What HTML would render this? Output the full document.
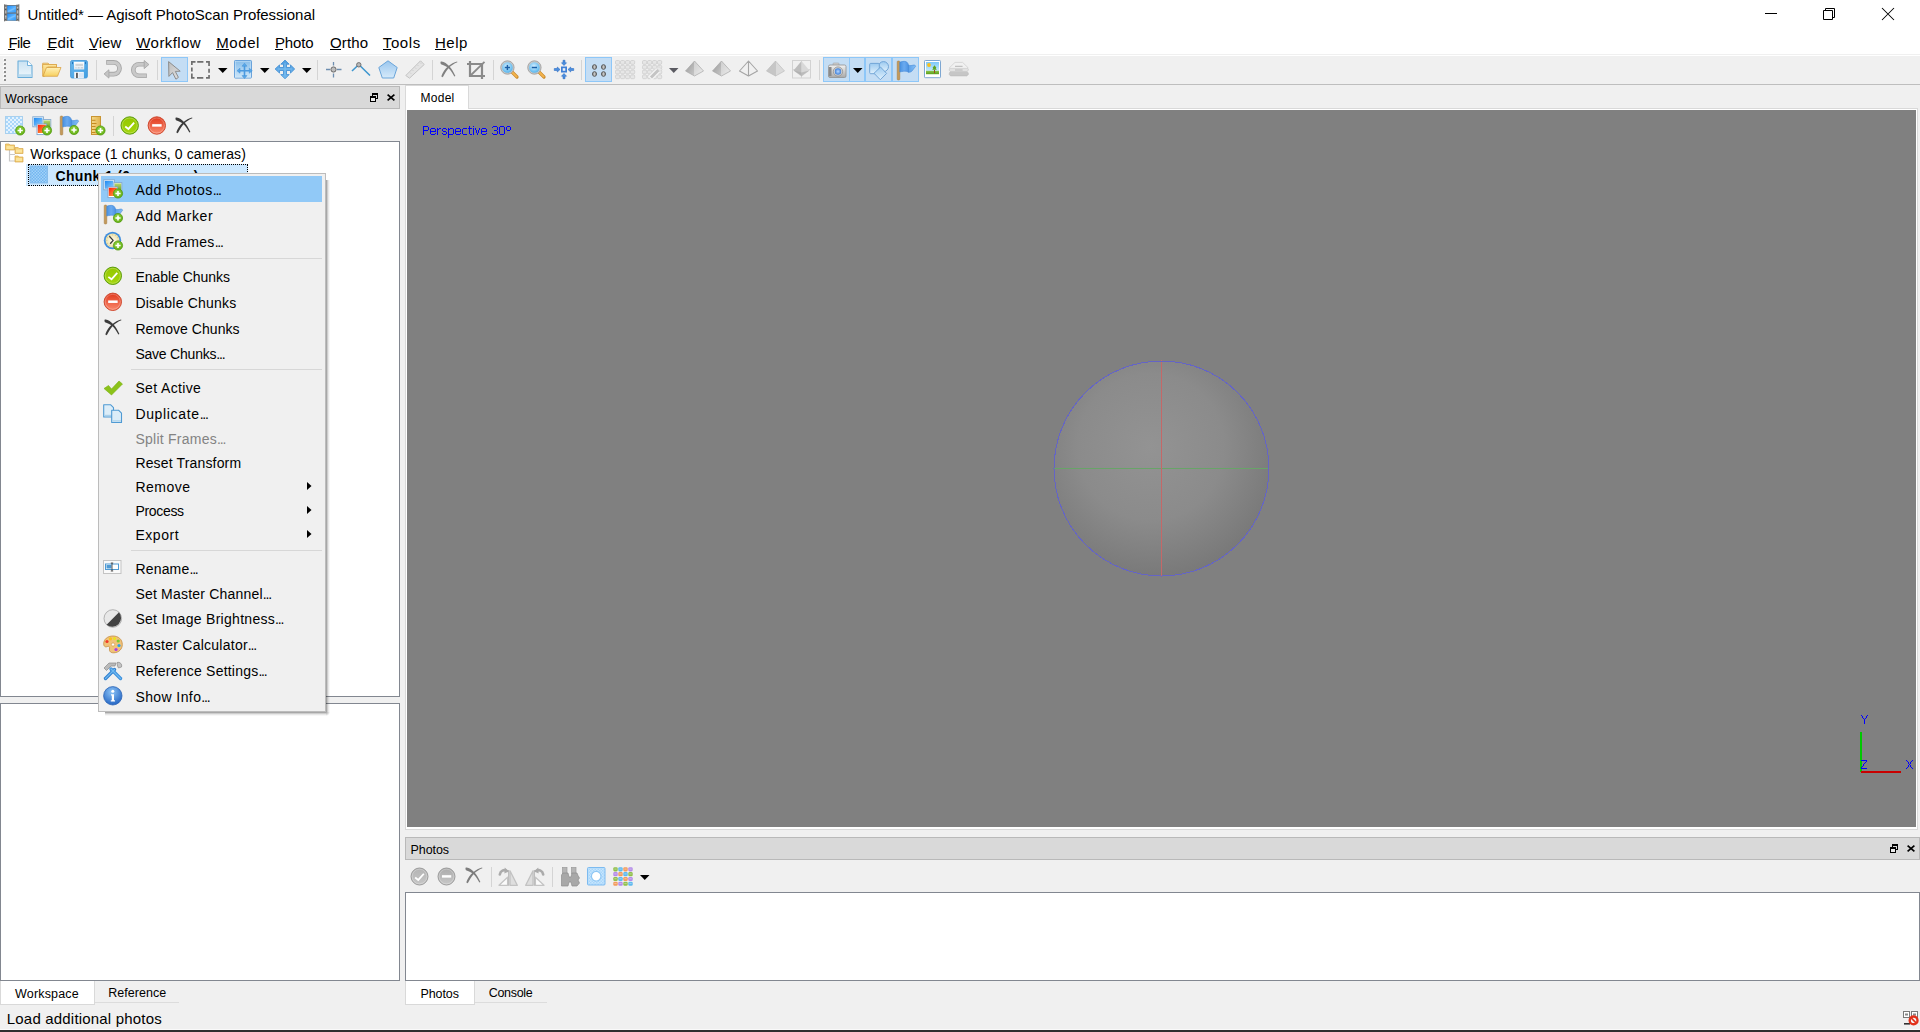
<!DOCTYPE html>
<html><head><meta charset="utf-8">
<style>
*{box-sizing:border-box;margin:0;padding:0}
html,body{width:1920px;height:1032px;overflow:hidden;background:#f0f0f0;font-family:"Liberation Sans",sans-serif;color:#000}
.a{position:absolute}
.t{position:absolute;white-space:nowrap;line-height:1}
svg{position:absolute;overflow:visible}
</style></head><body>
<div class="a" style="left:0px;top:0px;width:1920px;height:54px;background:#fff;"></div>
<div class="a" style="left:0px;top:54px;width:1920px;height:1px;background:#f0f0f0;"></div>
<div class="a" style="left:0px;top:55px;width:1920px;height:1px;background:#fff;"></div>
<svg style="left:4.35px;top:4.35px" width="16" height="18" viewBox="0 0 16 18"><defs><linearGradient id="g1" x1="0" y1="0" x2="1" y2="1"><stop offset="0" stop-color="#1a8cff"/><stop offset="0.55" stop-color="#5db4ff"/><stop offset="1" stop-color="#2f96f5"/></linearGradient></defs><defs><linearGradient id="g2" x1="0" y1="0" x2="1" y2="0"><stop offset="0" stop-color="#6c6c6c"/><stop offset="0.5" stop-color="#a4a4a4"/><stop offset="1" stop-color="#6c6c6c"/></linearGradient></defs><path d="M0 0.3Q1.6 0.9 3.3 0.9H12Q13.7 0.9 15.35 0.3V17.4Q13.7 16.8 12 16.8H3.3Q1.6 16.8 0 17.4Z" fill="#727272"/><rect x="0.3" y="0.8" width="2.9" height="16.2" fill="url(#g2)"/><rect x="12.1" y="0.8" width="2.9" height="16.2" fill="url(#g2)"/><rect x="3.25" y="1.7" width="8.75" height="7.05" fill="url(#g1)"/><rect x="3.25" y="9.35" width="8.75" height="7.1" fill="url(#g1)"/><rect x="3.25" y="8.75" width="8.75" height="0.6" fill="#76675e"/><path d="M4 6.5L11.5 3.5V5L4 8Z M4 14L11.5 11V12.5L4 15.5Z" fill="#fff" opacity="0.18"/><rect x="1" y="2.6" width="1.4" height="1" fill="#d0d0d0"/><rect x="12.9" y="2.6" width="1.4" height="1" fill="#d0d0d0"/><rect x="1" y="7.5" width="1.4" height="1" fill="#d0d0d0"/><rect x="12.9" y="7.5" width="1.4" height="1" fill="#d0d0d0"/><rect x="1" y="12.3" width="1.4" height="1" fill="#d0d0d0"/><rect x="12.9" y="12.3" width="1.4" height="1" fill="#d0d0d0"/><rect x="1" y="1.5" width="1.4" height="1" fill="#505050"/><rect x="12.9" y="1.5" width="1.4" height="1" fill="#505050"/><rect x="1" y="4.9" width="1.4" height="1" fill="#505050"/><rect x="12.9" y="4.9" width="1.4" height="1" fill="#505050"/><rect x="1" y="9.8" width="1.4" height="1" fill="#505050"/><rect x="12.9" y="9.8" width="1.4" height="1" fill="#505050"/><rect x="1" y="15.2" width="1.4" height="1" fill="#505050"/><rect x="12.9" y="15.2" width="1.4" height="1" fill="#505050"/></svg>
<div class="t" style="left:27.5px;top:7px;font-size:15px;letter-spacing:-0.044px;">Untitled* — Agisoft PhotoScan Professional</div>
<svg style="left:1765px;top:13px" width="12" height="1" viewBox="0 0 12 1"><rect x="0" y="0" width="12" height="1" fill="#000"/></svg>
<svg style="left:1822px;top:7px" width="14" height="14" viewBox="0 0 14 14"><path d="M1.5 3.5H10.5V12.5H1.5Z M3.5 3V1.5H12.5V10.5H11" fill="none" stroke="#000" stroke-width="1"/></svg>
<svg style="left:1882px;top:8px" width="12" height="12" viewBox="0 0 12 12"><path d="M0 0L12 12M12 0L0 12" stroke="#000" stroke-width="1.05"/></svg>
<div class="t" style="left:8.5px;top:35px;font-size:15px;letter-spacing:-0.6px;">File</div>
<div class="t" style="left:47.5px;top:35px;font-size:15px;letter-spacing:0.066px;">Edit</div>
<div class="t" style="left:89px;top:35px;font-size:15px;letter-spacing:0.0px;">View</div>
<div class="t" style="left:136.3px;top:35px;font-size:15px;letter-spacing:0.429px;">Workflow</div>
<div class="t" style="left:216.3px;top:35px;font-size:15px;letter-spacing:0.55px;">Model</div>
<div class="t" style="left:275px;top:35px;font-size:15px;letter-spacing:-0.15px;">Photo</div>
<div class="t" style="left:330px;top:35px;font-size:15px;letter-spacing:0.15px;">Ortho</div>
<div class="t" style="left:382.8px;top:35px;font-size:15px;letter-spacing:0.6px;">Tools</div>
<div class="t" style="left:435px;top:35px;font-size:15px;letter-spacing:0.533px;">Help</div>
<div class="a" style="left:8px;top:49px;width:7px;height:1px;background:#000;"></div>
<div class="a" style="left:47px;top:49px;width:8px;height:1px;background:#000;"></div>
<div class="a" style="left:89px;top:49px;width:8px;height:1px;background:#000;"></div>
<div class="a" style="left:136px;top:49px;width:14px;height:1px;background:#000;"></div>
<div class="a" style="left:216px;top:49px;width:13px;height:1px;background:#000;"></div>
<div class="a" style="left:275px;top:49px;width:8px;height:1px;background:#000;"></div>
<div class="a" style="left:330px;top:49px;width:11px;height:1px;background:#000;"></div>
<div class="a" style="left:383px;top:49px;width:8px;height:1px;background:#000;"></div>
<div class="a" style="left:435px;top:49px;width:11px;height:1px;background:#000;"></div>
<div class="a" style="left:0px;top:84px;width:1920px;height:1px;background:#bebebe;"></div>
<div class="a" style="left:3px;top:58px;width:2px;height:2px;background:#fbfbfb;"></div>
<div class="a" style="left:4px;top:59px;width:2px;height:2px;background:#8e8e8e;"></div>
<div class="a" style="left:3px;top:62px;width:2px;height:2px;background:#fbfbfb;"></div>
<div class="a" style="left:4px;top:63px;width:2px;height:2px;background:#8e8e8e;"></div>
<div class="a" style="left:3px;top:66px;width:2px;height:2px;background:#fbfbfb;"></div>
<div class="a" style="left:4px;top:67px;width:2px;height:2px;background:#8e8e8e;"></div>
<div class="a" style="left:3px;top:70px;width:2px;height:2px;background:#fbfbfb;"></div>
<div class="a" style="left:4px;top:71px;width:2px;height:2px;background:#8e8e8e;"></div>
<div class="a" style="left:3px;top:74px;width:2px;height:2px;background:#fbfbfb;"></div>
<div class="a" style="left:4px;top:75px;width:2px;height:2px;background:#8e8e8e;"></div>
<div class="a" style="left:3px;top:78px;width:2px;height:2px;background:#fbfbfb;"></div>
<div class="a" style="left:4px;top:79px;width:2px;height:2px;background:#8e8e8e;"></div>
<svg style="left:17px;top:60px" width="16" height="19" viewBox="0 0 16 19"><defs><linearGradient id="g3" x1="0" y1="0" x2="0" y2="1"><stop offset="0" stop-color="#c9e2f2"/><stop offset="1" stop-color="#eef7fc"/></linearGradient></defs><path d="M1 1H10.5L15 5.5V17.5H1Z" fill="url(#g3)" stroke="#67acd9" stroke-width="1.05" stroke-linejoin="round"/><path d="M10.5 1V5.5H15" fill="#fff" stroke="#67acd9" stroke-width="0.9"/><rect x="1.6" y="14.2" width="12.8" height="2.7" fill="#bcdcef"/></svg>
<svg style="left:42px;top:62px" width="20" height="15" viewBox="0 0 20 15"><defs><linearGradient id="g4" x1="0" y1="0" x2="0" y2="1"><stop offset="0" stop-color="#fde7a0"/><stop offset="1" stop-color="#f2c24e"/></linearGradient></defs><defs><linearGradient id="g5" x1="0" y1="0" x2="0" y2="1"><stop offset="0" stop-color="#fff1b8"/><stop offset="1" stop-color="#f7cf5d"/></linearGradient></defs><path d="M0.7 1.2H6L7.5 2.5H14.5V6H0.7Z" fill="url(#g4)" stroke="#d9a245" stroke-width="0.8"/><path d="M0.7 14.3V2.5L14.5 2.5V5H5.5L2.5 14.3Z" fill="url(#g4)" stroke="#d9a245" stroke-width="0.8"/><path d="M4.5 5.5H19L15.5 14.3H1Z" fill="url(#g5)" stroke="#d9a245" stroke-width="0.8" stroke-linejoin="round"/></svg>
<svg style="left:70px;top:60px" width="18" height="19" viewBox="0 0 18 19"><defs><linearGradient id="g6" x1="0" y1="0" x2="1" y2="1"><stop offset="0" stop-color="#6bb9ee"/><stop offset="1" stop-color="#3f9de2"/></linearGradient></defs><defs><linearGradient id="g7" x1="0" y1="0" x2="0" y2="1"><stop offset="0" stop-color="#ffffff"/><stop offset="1" stop-color="#dde8f1"/></linearGradient></defs><rect x="0.6" y="0.5" width="16.8" height="17.5" rx="1.6" fill="url(#g6)" stroke="#4a9ad8" stroke-width="0.9"/><rect x="4" y="1.8" width="10.2" height="7.7" fill="url(#g7)"/><path d="M5.5 4.3H13M5.5 5.3H13" stroke="#c4c8cc" stroke-width="0.9"/><path d="M5.5 7.8H6.5M7.8 7.8H9.6M10.8 7.8H13" stroke="#b0b4b8" stroke-width="0.7"/><rect x="2" y="1.8" width="0.9" height="2.3" fill="#1f6fb8"/><rect x="15" y="1.8" width="0.9" height="2.3" fill="#1f6fb8"/><rect x="4.2" y="11.9" width="9.6" height="6.4" fill="#f6f8fa"/><rect x="6.1" y="12.8" width="1.7" height="5.2" fill="#4a4a4e"/><rect x="8.8" y="12.8" width="4.2" height="4.9" fill="#d8e6f6"/></svg>
<div class="a" style="left:96px;top:60px;width:1px;height:20px;background:#d4d4d4;"></div>
<svg style="left:102px;top:58px" width="50" height="22" viewBox="0 0 50 22"><path d="M4.2 4.4H11.6A5.9 5.9 0 0 1 11.6 16.2H7" fill="none" stroke="#a6a6a6" stroke-width="4.8"/><path d="M5 4.4H11.6A5.9 5.9 0 0 1 11.6 16.2H7" fill="none" stroke="#c9c9c9" stroke-width="3"/><path d="M2.1 15.9L6.9 11.8V20.1Z" fill="#c4c4c4" stroke="#a6a6a6" stroke-width="0.9" stroke-linejoin="round"/><path d="M44.8 17.8H37.1A5.8 5.8 0 0 1 37.1 6.2H42.5" fill="none" stroke="#a6a6a6" stroke-width="4.6"/><path d="M44 17.8H37.1A5.8 5.8 0 0 1 37.1 6.2H42.5" fill="none" stroke="#c9c9c9" stroke-width="2.9"/><path d="M46.9 6.5L42.2 2.5V10.6Z" fill="#c4c4c4" stroke="#a6a6a6" stroke-width="0.9" stroke-linejoin="round"/></svg>
<div class="a" style="left:157px;top:60px;width:1px;height:20px;background:#d4d4d4;"></div>
<div class="a" style="left:161px;top:57px;width:27px;height:25px;background:#c4ddf4;border:1px solid #8ec7f8;"></div>
<svg style="left:160px;top:56px" width="28" height="26" viewBox="0 0 28 26"><defs><linearGradient id="g8" x1="0" y1="0" x2="1" y2="1"><stop offset="0" stop-color="#bdbdbd"/><stop offset="1" stop-color="#e2e2e2"/></linearGradient></defs><path d="M8.6 5.6L8.9 20.4L12.5 16.6L15.9 23.2L18.4 21.4L15.3 15.4L20.2 15.2Z" fill="url(#g8)" stroke="#8c8c8c" stroke-width="1" stroke-linejoin="round"/></svg>
<svg style="left:190px;top:60px" width="22" height="21" viewBox="0 0 22 21"><g fill="none" stroke="#6e6e6e" stroke-width="1.7"><path d="M1.85 5V1.85H5.5M7.2 1.85H13.4M16 1.85H19.05V6M1.85 7.5V11.4M19.05 8.8V12.8M1.85 13.6V17.85H4.5M7 17.85H13.3M16 17.85H19.05V15"/></g></svg>
<svg style="left:218px;top:68.2px" width="9.5" height="5" viewBox="0 0 9.5 5"><path d="M0 0H9.5L4.75 5Z" fill="#000"/></svg>
<svg style="left:234px;top:60px" width="20" height="20" viewBox="0 0 20 20"><defs><linearGradient id="g9" x1="0" y1="0" x2="0" y2="1"><stop offset="0" stop-color="#86bdea"/><stop offset="1" stop-color="#cfe7f9"/></linearGradient></defs><rect x="0.5" y="0.5" width="17" height="17.6" rx="0.8" fill="url(#g9)" stroke="#6aa3db" stroke-width="1"/><rect x="1.5" y="1.5" width="15" height="15.6" fill="none" stroke="#d8ecfb" stroke-width="0.6" opacity="0.7"/><path d="M10.5 5V16.5M4 10.7H16.5" stroke="#4b9ae0" stroke-width="1.6"/><path d="M10.5 3.2L8 6.2H13Z M10.5 18.6L8 15.6H13Z M3 10.7L6 8.2V13.2Z M18.3 10.7L15.3 8.2V13.2Z" fill="#5aa8e8" stroke="#3f8fd6" stroke-width="0.5" stroke-linejoin="round"/></svg>
<svg style="left:260px;top:67.8px" width="9.5" height="5" viewBox="0 0 9.5 5"><path d="M0 0H9.5L4.75 5Z" fill="#000"/></svg>
<svg style="left:275px;top:60px" width="20" height="19" viewBox="0 0 20 19"><defs><linearGradient id="g10" x1="0" y1="0" x2="0" y2="1"><stop offset="0" stop-color="#4f9de0"/><stop offset="1" stop-color="#74b9ee"/></linearGradient></defs><path d="M10 0.1L14.2 4.2H11.5V7.5H15.5V4.9L19.7 9L15.5 13.1V10.5H11.5V14.6H14.2L10 18.8L5.8 14.6H8.5V10.5H4.5V13.1L0.1 9L4.5 4.9V7.5H8.5V4.2H5.8Z" fill="url(#g10)" stroke="#3c8bd3" stroke-width="0.8" stroke-linejoin="round"/><path d="M10 3V15.5M3 9H17" stroke="#8ccaf5" stroke-width="0.8" opacity="0.8"/></svg>
<svg style="left:302px;top:67.8px" width="9.5" height="5" viewBox="0 0 9.5 5"><path d="M0 0H9.5L4.75 5Z" fill="#000"/></svg>
<div class="a" style="left:317px;top:60px;width:1px;height:20px;background:#d4d4d4;"></div>
<svg style="left:326px;top:62px" width="16" height="16" viewBox="0 0 16 16"><path d="M7.5 0V3.5M7.5 11.5V15.5M0 7.5H4M11 7.5H15.5" stroke="#6e8eb0" stroke-width="1.3"/><circle cx="7.5" cy="7.5" r="2.6" fill="#bdbdbd" stroke="#6a6a6a" stroke-width="1"/></svg>
<svg style="left:351px;top:62px" width="20" height="15" viewBox="0 0 20 15"><path d="M1 9L7.8 2.5L19 13.5" fill="none" stroke="#3f97cf" stroke-width="1.6"/><circle cx="7.8" cy="2.8" r="2.2" fill="#b8b8b8" stroke="#666" stroke-width="0.9"/></svg>
<svg style="left:378px;top:60px" width="20" height="19" viewBox="0 0 20 19"><defs><linearGradient id="g11" x1="0" y1="0" x2="0" y2="1"><stop offset="0" stop-color="#9ac6ee"/><stop offset="1" stop-color="#d6eafa"/></linearGradient></defs><path d="M10 0.8L19.2 7.5L15.7 18H4.3L0.8 7.5Z" fill="url(#g11)" stroke="#6aa5da" stroke-width="1" stroke-linejoin="round"/></svg>
<svg style="left:405px;top:60px" width="20" height="19" viewBox="0 0 20 19"><path d="M0.8 15.5L15.5 0.8L19.2 4.5L4.5 18.2Z" fill="#e3e3e3" stroke="#c4c4c4" stroke-width="1"/><path d="M5 12.5l1.3 1.3M7.5 10l1 1M10 7.5l1.3 1.3M12.5 5l1 1M15 2.5l1.3 1.3" stroke="#c8c8c8" stroke-width="0.8"/></svg>
<div class="a" style="left:432px;top:60px;width:1px;height:20px;background:#d4d4d4;"></div>
<svg style="left:437px;top:58px" width="24" height="24" viewBox="0 0 24 24"><path d="M3.8 3.6C6.5 3 9.8 5.5 12.8 8.8C15 11.5 16.8 14.5 18.4 17.9L17.3 18.4C15.5 15 13.5 12.2 11.5 10.3C9 8 6 7.2 4.5 6.6C3.4 6.1 3.2 4.2 3.8 3.6Z" fill="#808080"/><path d="M20.4 4.3C17 5.6 14.2 7.6 12.2 9.6C9.2 13 7.2 16.5 6.2 18.6C5.3 19.8 4.2 19.3 4.6 17.6C5.8 14 8.3 10.5 10.9 8.4C14 5.9 17 4.4 20.1 3.5Z" fill="#808080"/></svg>
<svg style="left:467px;top:61px" width="19" height="18" viewBox="0 0 19 18"><path d="M3 0V15H18M0 3H15V18" fill="none" stroke="#8a8a8a" stroke-width="2.2"/><path d="M3.5 14.5L17.5 0.8" stroke="#8a8a8a" stroke-width="1.8"/></svg>
<div class="a" style="left:493px;top:60px;width:1px;height:20px;background:#d4d4d4;"></div>
<svg style="left:500px;top:60px" width="19" height="19" viewBox="0 0 19 19"><defs><radialGradient id="g12" cx="0.45" cy="0.4" r="0.6"><stop offset="0" stop-color="#d8f0ff"/><stop offset="1" stop-color="#55b5ee"/></radialGradient></defs><path d="M11.5 11.5L17 17" stroke="#c98a2a" stroke-width="3.2" stroke-linecap="round"/><path d="M12 12L16.6 16.6" stroke="#f3b34d" stroke-width="2" stroke-linecap="round"/><circle cx="7.4" cy="7.5" r="6.7" fill="#c8c8c8" stroke="#9a9a9a" stroke-width="0.8"/><circle cx="7.4" cy="7.5" r="5.3" fill="url(#g12)"/><path d="M4.8 7.5H10" stroke="#1a5fa6" stroke-width="1.5"/><path d="M7.4 4.9V10.1" stroke="#1a5fa6" stroke-width="1.5"/></svg>
<svg style="left:527px;top:60px" width="19" height="19" viewBox="0 0 19 19"><defs><radialGradient id="g13" cx="0.45" cy="0.4" r="0.6"><stop offset="0" stop-color="#d8f0ff"/><stop offset="1" stop-color="#55b5ee"/></radialGradient></defs><path d="M11.5 11.5L17 17" stroke="#c98a2a" stroke-width="3.2" stroke-linecap="round"/><path d="M12 12L16.6 16.6" stroke="#f3b34d" stroke-width="2" stroke-linecap="round"/><circle cx="7.4" cy="7.5" r="6.7" fill="#c8c8c8" stroke="#9a9a9a" stroke-width="0.8"/><circle cx="7.4" cy="7.5" r="5.3" fill="url(#g13)"/><path d="M4.8 7.5H10" stroke="#1a5fa6" stroke-width="1.5"/></svg>
<svg style="left:554px;top:60px" width="20" height="19" viewBox="0 0 20 19"><rect x="7" y="6.5" width="6" height="6" fill="#3e7fd6"/><rect x="8.7" y="8.2" width="2.6" height="2.6" fill="#e8f0fa"/><path d="M10 5.5L7.5 2.8H9V0.3H11V2.8H12.5Z M10 13.5L7.5 16.2H9V18.7H11V16.2H12.5Z M6 9.5L3.3 7V8.5H0.3V10.5H3.3V12Z M14 9.5L16.7 7V8.5H19.7V10.5H16.7V12Z" fill="#4a8ee0" stroke="#2f6fc2" stroke-width="0.6" stroke-linejoin="round"/></svg>
<div class="a" style="left:581px;top:60px;width:1px;height:20px;background:#d4d4d4;"></div>
<div class="a" style="left:585px;top:57px;width:27px;height:25px;background:#c4ddf4;border:1px solid #8ec7f8;"></div>
<svg style="left:592.4px;top:63.5px" width="5" height="6" viewBox="0 0 5 6"><ellipse cx="2.5" cy="3" rx="2.05" ry="2.35" fill="#8d8d8d" stroke="#555" stroke-width="0.9"/><rect x="1.7" y="1.6" width="1.6" height="2.8" rx="0.5" fill="#d8d8d8"/><path d="M1.7 3H3.3" stroke="#8d8d8d" stroke-width="0.5"/></svg>
<svg style="left:600.5px;top:63.5px" width="5" height="6" viewBox="0 0 5 6"><ellipse cx="2.5" cy="3" rx="2.05" ry="2.35" fill="#8d8d8d" stroke="#555" stroke-width="0.9"/><rect x="1.7" y="1.6" width="1.6" height="2.8" rx="0.5" fill="#d8d8d8"/><path d="M1.7 3H3.3" stroke="#8d8d8d" stroke-width="0.5"/></svg>
<svg style="left:592.4px;top:71.4px" width="5" height="6" viewBox="0 0 5 6"><ellipse cx="2.5" cy="3" rx="2.05" ry="2.35" fill="#8d8d8d" stroke="#555" stroke-width="0.9"/><rect x="1.7" y="1.6" width="1.6" height="2.8" rx="0.5" fill="#d8d8d8"/><path d="M1.7 3H3.3" stroke="#8d8d8d" stroke-width="0.5"/></svg>
<svg style="left:600.5px;top:71.4px" width="5" height="6" viewBox="0 0 5 6"><ellipse cx="2.5" cy="3" rx="2.05" ry="2.35" fill="#8d8d8d" stroke="#555" stroke-width="0.9"/><rect x="1.7" y="1.6" width="1.6" height="2.8" rx="0.5" fill="#d8d8d8"/><path d="M1.7 3H3.3" stroke="#8d8d8d" stroke-width="0.5"/></svg>
<svg style="left:615px;top:60px" width="20" height="20" viewBox="0 0 20 20"><rect x="0.5" y="0.5" width="4.2" height="3.8" rx="1.2" fill="#e6e6e6" stroke="#cdcdcd" stroke-width="0.8"/><rect x="0.5" y="5.3" width="4.2" height="3.8" rx="1.2" fill="#e6e6e6" stroke="#cdcdcd" stroke-width="0.8"/><rect x="0.5" y="10.1" width="4.2" height="3.8" rx="1.2" fill="#e6e6e6" stroke="#cdcdcd" stroke-width="0.8"/><rect x="0.5" y="14.899999999999999" width="4.2" height="3.8" rx="1.2" fill="#e6e6e6" stroke="#cdcdcd" stroke-width="0.8"/><rect x="5.5" y="0.5" width="4.2" height="3.8" rx="1.2" fill="#e6e6e6" stroke="#cdcdcd" stroke-width="0.8"/><rect x="5.5" y="5.3" width="4.2" height="3.8" rx="1.2" fill="#e6e6e6" stroke="#cdcdcd" stroke-width="0.8"/><rect x="5.5" y="10.1" width="4.2" height="3.8" rx="1.2" fill="#e6e6e6" stroke="#cdcdcd" stroke-width="0.8"/><rect x="5.5" y="14.899999999999999" width="4.2" height="3.8" rx="1.2" fill="#e6e6e6" stroke="#cdcdcd" stroke-width="0.8"/><rect x="10.5" y="0.5" width="4.2" height="3.8" rx="1.2" fill="#e6e6e6" stroke="#cdcdcd" stroke-width="0.8"/><rect x="10.5" y="5.3" width="4.2" height="3.8" rx="1.2" fill="#e6e6e6" stroke="#cdcdcd" stroke-width="0.8"/><rect x="10.5" y="10.1" width="4.2" height="3.8" rx="1.2" fill="#e6e6e6" stroke="#cdcdcd" stroke-width="0.8"/><rect x="10.5" y="14.899999999999999" width="4.2" height="3.8" rx="1.2" fill="#e6e6e6" stroke="#cdcdcd" stroke-width="0.8"/><rect x="15.5" y="0.5" width="4.2" height="3.8" rx="1.2" fill="#e6e6e6" stroke="#cdcdcd" stroke-width="0.8"/><rect x="15.5" y="5.3" width="4.2" height="3.8" rx="1.2" fill="#e6e6e6" stroke="#cdcdcd" stroke-width="0.8"/><rect x="15.5" y="10.1" width="4.2" height="3.8" rx="1.2" fill="#e6e6e6" stroke="#cdcdcd" stroke-width="0.8"/><rect x="15.5" y="14.899999999999999" width="4.2" height="3.8" rx="1.2" fill="#e6e6e6" stroke="#cdcdcd" stroke-width="0.8"/></svg>
<svg style="left:642px;top:60px" width="20" height="20" viewBox="0 0 20 20"><rect x="0.5" y="0.5" width="4.2" height="3.8" rx="1.2" fill="#e6e6e6" stroke="#cdcdcd" stroke-width="0.8"/><rect x="0.5" y="5.3" width="4.2" height="3.8" rx="1.2" fill="#e6e6e6" stroke="#cdcdcd" stroke-width="0.8"/><rect x="0.5" y="10.1" width="4.2" height="3.8" rx="1.2" fill="#e6e6e6" stroke="#cdcdcd" stroke-width="0.8"/><rect x="0.5" y="14.899999999999999" width="4.2" height="3.8" rx="1.2" fill="#e6e6e6" stroke="#cdcdcd" stroke-width="0.8"/><rect x="5.5" y="0.5" width="4.2" height="3.8" rx="1.2" fill="#e6e6e6" stroke="#cdcdcd" stroke-width="0.8"/><rect x="5.5" y="5.3" width="4.2" height="3.8" rx="1.2" fill="#e6e6e6" stroke="#cdcdcd" stroke-width="0.8"/><rect x="5.5" y="10.1" width="4.2" height="3.8" rx="1.2" fill="#e6e6e6" stroke="#cdcdcd" stroke-width="0.8"/><rect x="5.5" y="14.899999999999999" width="4.2" height="3.8" rx="1.2" fill="#e6e6e6" stroke="#cdcdcd" stroke-width="0.8"/><rect x="10.5" y="0.5" width="4.2" height="3.8" rx="1.2" fill="#e6e6e6" stroke="#cdcdcd" stroke-width="0.8"/><rect x="10.5" y="5.3" width="4.2" height="3.8" rx="1.2" fill="#e6e6e6" stroke="#cdcdcd" stroke-width="0.8"/><rect x="10.5" y="10.1" width="4.2" height="3.8" rx="1.2" fill="#e6e6e6" stroke="#cdcdcd" stroke-width="0.8"/><rect x="10.5" y="14.899999999999999" width="4.2" height="3.8" rx="1.2" fill="#e6e6e6" stroke="#cdcdcd" stroke-width="0.8"/><rect x="15.5" y="0.5" width="4.2" height="3.8" rx="1.2" fill="#e6e6e6" stroke="#cdcdcd" stroke-width="0.8"/><rect x="15.5" y="5.3" width="4.2" height="3.8" rx="1.2" fill="#e6e6e6" stroke="#cdcdcd" stroke-width="0.8"/><rect x="15.5" y="10.1" width="4.2" height="3.8" rx="1.2" fill="#e6e6e6" stroke="#cdcdcd" stroke-width="0.8"/><rect x="15.5" y="14.899999999999999" width="4.2" height="3.8" rx="1.2" fill="#e6e6e6" stroke="#cdcdcd" stroke-width="0.8"/><path d="M7 16.5L15.5 8L18.5 11L10 19.5Z" fill="#c4c4c4" stroke="#f4f4f4" stroke-width="1.2"/><path d="M15 8.5L17 6.5L20 9.5L18 11.5Z" fill="#e8e8e8" stroke="#cfcfcf" stroke-width="0.6"/></svg>
<svg style="left:669px;top:68px" width="9.5" height="5" viewBox="0 0 9.5 5"><path d="M0 0H9.5L4.75 5Z" fill="#5b5b62"/></svg>
<svg style="left:684.6px;top:60px" width="19" height="17" viewBox="0 0 19 17"><defs><linearGradient id="g14" x1="0" y1="0" x2="1" y2="1"><stop offset="0" stop-color="#9a9a9a"/><stop offset="1" stop-color="#c9c9c9"/></linearGradient></defs><defs><linearGradient id="g15" x1="0" y1="0" x2="1" y2="1"><stop offset="0" stop-color="#cfcfcf"/><stop offset="1" stop-color="#ececec"/></linearGradient></defs><path d="M9.5 1L0.5 11L9.5 16Z" fill="url(#g14)"/><path d="M9.5 1L18.5 11L9.5 16Z" fill="url(#g15)"/><path d="M9.5 1L0.5 11L9.5 16L18.5 11Z" fill="none" stroke="#a8a8a8" stroke-width="0.7" stroke-linejoin="round"/></svg>
<svg style="left:711.5px;top:60px" width="19" height="17" viewBox="0 0 19 17"><defs><linearGradient id="g16" x1="0" y1="0" x2="1" y2="1"><stop offset="0" stop-color="#9a9a9a"/><stop offset="1" stop-color="#c9c9c9"/></linearGradient></defs><defs><linearGradient id="g17" x1="0" y1="0" x2="1" y2="1"><stop offset="0" stop-color="#cfcfcf"/><stop offset="1" stop-color="#ececec"/></linearGradient></defs><path d="M9.5 1L0.5 11L9.5 16Z" fill="url(#g16)"/><path d="M9.5 1L18.5 11L9.5 16Z" fill="url(#g17)"/><path d="M9.5 1L0.5 11L9.5 16L18.5 11Z" fill="none" stroke="#a8a8a8" stroke-width="0.7" stroke-linejoin="round"/></svg>
<svg style="left:738.5px;top:60px" width="19" height="17" viewBox="0 0 19 17"><defs><linearGradient id="g18" x1="0" y1="0" x2="1" y2="1"><stop offset="0" stop-color="#9a9a9a"/><stop offset="1" stop-color="#c9c9c9"/></linearGradient></defs><defs><linearGradient id="g19" x1="0" y1="0" x2="1" y2="1"><stop offset="0" stop-color="#cfcfcf"/><stop offset="1" stop-color="#ececec"/></linearGradient></defs><path d="M9.5 1L0.5 11L9.5 16L18.5 11Z M9.5 1V16" fill="none" stroke="#a5a5a5" stroke-width="1.1" stroke-linejoin="round"/></svg>
<svg style="left:765.5px;top:60px" width="19" height="17" viewBox="0 0 19 17"><defs><linearGradient id="g20" x1="0" y1="0" x2="1" y2="1"><stop offset="0" stop-color="#9a9a9a"/><stop offset="1" stop-color="#c9c9c9"/></linearGradient></defs><defs><linearGradient id="g21" x1="0" y1="0" x2="1" y2="1"><stop offset="0" stop-color="#cfcfcf"/><stop offset="1" stop-color="#ececec"/></linearGradient></defs><path d="M9.5 1L0.5 11L9.5 16Z" fill="#c6c6c6"/><path d="M9.5 1L18.5 11L9.5 16Z" fill="#dadada"/><path d="M9.5 1L0.5 11L9.5 16L18.5 11Z M9.5 1V16" fill="none" stroke="#bdbdbd" stroke-width="0.7"/></svg>
<svg style="left:792px;top:60px" width="20" height="19" viewBox="0 0 20 19"><rect x="0.5" y="0.5" width="18" height="17.5" fill="none" stroke="#d2d2d2" stroke-width="1"/><path d="M9.5 0.5V18M0.5 9.5H18.5" stroke="#d2d2d2" stroke-width="0.8"/><path d="M9.5 1L1.5 10.5L9.5 15.5Z" fill="#bdbdbd"/><path d="M9.5 1L17.5 10.5L9.5 15.5Z" fill="#d8d8d8"/><path d="M1.5 10.5L9.5 16.5L17.5 10.5L9.5 12.5Z" fill="#a9a9a9" opacity="0.6"/></svg>
<div class="a" style="left:819px;top:60px;width:1px;height:20px;background:#d4d4d4;"></div>
<div class="a" style="left:823px;top:57px;width:96px;height:25px;background:#c4ddf4;border:1px solid #8ec7f8;"></div>
<div class="a" style="left:849px;top:58px;width:1px;height:23px;background:#8ec7f8;"></div>
<div class="a" style="left:864px;top:58px;width:2px;height:23px;background:#8ec7f8;"></div>
<div class="a" style="left:891px;top:58px;width:2px;height:23px;background:#8ec7f8;"></div>
<svg style="left:828px;top:63px" width="19" height="15" viewBox="0 0 19 15"><defs><linearGradient id="g22" x1="0" y1="0" x2="0" y2="1"><stop offset="0" stop-color="#f2f2f2"/><stop offset="1" stop-color="#a9a9a9"/></linearGradient></defs><defs><radialGradient id="g23" cx="0.5" cy="0.5" r="0.5"><stop offset="0" stop-color="#b8d8ff"/><stop offset="1" stop-color="#3f7fd8"/></radialGradient></defs><rect x="5" y="0" width="6" height="2.5" rx="0.8" fill="#cfcfcf" stroke="#9a9a9a" stroke-width="0.5"/><rect x="0.5" y="2" width="17.5" height="12.5" rx="1.5" fill="url(#g22)" stroke="#8f8f8f" stroke-width="0.8"/><rect x="1" y="4" width="2.5" height="9" fill="#8a8a8a"/><circle cx="10" cy="8.5" r="4.6" fill="#d5d5d5" stroke="#8d8d8d" stroke-width="0.8"/><circle cx="10" cy="8.5" r="3.2" fill="url(#g23)"/></svg>
<svg style="left:852.7px;top:68px" width="9.5" height="5" viewBox="0 0 9.5 5"><path d="M0 0H9.5L4.75 5Z" fill="#000"/></svg>
<svg style="left:869px;top:61px" width="20" height="20" viewBox="0 0 20 20"><defs><linearGradient id="g24" x1="0" y1="0" x2="0" y2="1"><stop offset="0" stop-color="#9ccaf0"/><stop offset="1" stop-color="#dff0fc"/></linearGradient></defs><circle cx="14.5" cy="5.6" r="5" fill="url(#g24)" stroke="#6a9fd3" stroke-width="0.9"/><rect x="0.7" y="2.4" width="9.6" height="10.3" rx="1" fill="url(#g24)" stroke="#6a9fd3" stroke-width="0.9"/><path d="M11.5 6L17.6 12.4L11.3 18.7L5 12.3Z" fill="url(#g24)" stroke="#6a9fd3" stroke-width="0.9" stroke-linejoin="round"/></svg>
<svg style="left:897px;top:61px" width="19" height="19" viewBox="0 0 19 19"><defs><linearGradient id="g25" x1="0" y1="0" x2="1" y2="0"><stop offset="0" stop-color="#4a92e0"/><stop offset="0.5" stop-color="#6aaaf0"/><stop offset="1" stop-color="#4f95e3"/></linearGradient></defs><defs><linearGradient id="g26" x1="0" y1="0" x2="1" y2="0"><stop offset="0" stop-color="#5a9fe8"/><stop offset="1" stop-color="#86c0f7"/></linearGradient></defs><rect x="0.2" y="0" width="2.6" height="19" rx="0.9" fill="#c49a5a" stroke="#a27a42" stroke-width="0.5"/><path d="M11.3 4C12.8 4.8 14.5 4.6 16 4.2C17.3 3.9 18.2 4.2 18.7 5.1C17.2 6.8 16.2 8.8 15 10C13.8 11.1 12.5 11.4 11.3 11.2Z" fill="url(#g26)" stroke="#3f86d6" stroke-width="0.6" stroke-linejoin="round"/><path d="M2.8 1.3C4.5 0.5 7 0 9 0.7C10.4 1.2 11.2 2.4 11.4 4V11.2C10.5 10.3 8.2 10 6.2 10.3C4.6 10.5 3.6 10.8 2.8 11Z" fill="url(#g25)" stroke="#3f86d6" stroke-width="0.6" stroke-linejoin="round"/></svg>
<svg style="left:924px;top:60px" width="18" height="18" viewBox="0 0 18 18"><defs><linearGradient id="g27" x1="0" y1="0" x2="0" y2="1"><stop offset="0" stop-color="#7cc8f8"/><stop offset="1" stop-color="#c8ecfc"/></linearGradient></defs><defs><linearGradient id="g28" x1="0" y1="0" x2="0" y2="1"><stop offset="0" stop-color="#8cc44a"/><stop offset="1" stop-color="#5a9e1a"/></linearGradient></defs><rect x="0.5" y="0.5" width="16" height="17.2" rx="0.8" fill="#fff" stroke="#7ea7d2" stroke-width="1"/><rect x="2" y="2" width="13" height="9" fill="url(#g27)"/><rect x="2" y="10.8" width="13" height="3.4" fill="url(#g28)"/><circle cx="5" cy="5" r="1.9" fill="#fbbf1a"/><path d="M10.5 13.2V10" stroke="#9a4a1e" stroke-width="1"/><path d="M10.5 5.3L12.5 8L11.7 8.3L12.8 9.8H8.2L9.3 8.3L8.5 8Z" fill="#5ea21e"/></svg>
<svg style="left:949px;top:62px" width="20" height="15" viewBox="0 0 20 15"><path d="M1.5 9.4H17.8L19.3 11L19.3 12.6L17.8 13.9H1.5L0.3 12.6V11Z" fill="#c6c6c6" stroke="#bababa" stroke-width="0.6"/><path d="M1.5 5.6H17.8L19.3 7.2V8.4L17.8 9.6H1.5L0.3 8.4V7.2Z" fill="#e2e2e2" stroke="#c4c4c4" stroke-width="0.6"/><path d="M6 0.4H13.6L19.2 5.8L17.8 6.4H1.5L0.4 5.8Z" fill="#f1f1f1" stroke="#cbcbcb" stroke-width="0.7" stroke-linejoin="round"/><path d="M6 4.3H13.6M6 8H13.6" stroke="#b6b6b6" stroke-width="1"/></svg>
<div class="a" style="left:0px;top:86px;width:400px;height:23px;background:#d9d9d9;border:1px solid #b9b9b9;"></div>
<div class="t" style="left:5px;top:93px;font-size:12.5px;letter-spacing:0.074px;">Workspace</div>
<svg style="left:370px;top:93px" width="8" height="9" viewBox="0 0 8 9"><path d="M2 0H8V6H5V5H7V2H3V3H2Z" fill="#000"/><path d="M0 3H6V9H0Z M1 5V8H5V5Z" fill="#000" fill-rule="evenodd"/><rect x="1" y="5" width="4" height="3" fill="#ececec"/></svg>
<svg style="left:387px;top:94px" width="8" height="7" viewBox="0 0 8 7"><path d="M0.6 0.6L7.4 6.4M7.4 0.6L0.6 6.4" stroke="#000" stroke-width="1.7"/></svg>
<svg style="left:5px;top:116px" width="21" height="20" viewBox="0 0 21 20"><defs><pattern id="chk" x="1" y="1" width="4" height="4" patternUnits="userSpaceOnUse"><rect width="4" height="4" fill="#e3f2fe"/><rect width="2" height="2" fill="#aad7fb"/><rect x="2" y="2" width="2" height="2" fill="#aad7fb"/></pattern></defs><rect x="0.5" y="0.5" width="17" height="17" fill="url(#chk)" stroke="#a8d0ee" stroke-width="1"/><defs><radialGradient id="g29" cx="0.45" cy="0.4" r="0.7"><stop offset="0" stop-color="#9ad84a"/><stop offset="1" stop-color="#5aa80a"/></radialGradient></defs><circle cx="15.2" cy="14.5" r="4.6" fill="url(#g29)" stroke="#4c9608" stroke-width="0.7"/><path d="M12.6 14.5H17.8M15.2 11.9V17.1" stroke="#fff" stroke-width="1.6"/></svg>
<svg style="left:32px;top:116px" width="21" height="20" viewBox="0 0 21 20"><defs><linearGradient id="g30" x1="0" y1="0" x2="1" y2="1"><stop offset="0" stop-color="#1e88f0"/><stop offset="1" stop-color="#8fd0ff"/></linearGradient></defs><defs><linearGradient id="g31" x1="0" y1="0" x2="0" y2="1"><stop offset="0" stop-color="#b9d86e"/><stop offset="1" stop-color="#5e9a23"/></linearGradient></defs><defs><linearGradient id="g32" x1="0" y1="0" x2="1" y2="1"><stop offset="0" stop-color="#ff1a10"/><stop offset="1" stop-color="#ffb23c"/></linearGradient></defs><rect x="0.8" y="0.8" width="10.6" height="10" fill="#fff" stroke="#7fa6cc" stroke-width="0.9"/><rect x="1.8" y="1.8" width="8.6" height="8" fill="url(#g30)"/><rect x="11" y="3.6" width="7.8" height="9.6" fill="#fff" stroke="#7fa6cc" stroke-width="0.9"/><rect x="11.6" y="4.4" width="6.6" height="8" fill="url(#g31)"/><rect x="5" y="8" width="9.6" height="10.6" fill="#fff" stroke="#7fa6cc" stroke-width="0.9"/><rect x="5.8" y="8.8" width="8" height="8.2" fill="url(#g32)"/><defs><radialGradient id="g33" cx="0.45" cy="0.4" r="0.7"><stop offset="0" stop-color="#9ad84a"/><stop offset="1" stop-color="#5aa80a"/></radialGradient></defs><circle cx="15" cy="14.5" r="4.6" fill="url(#g33)" stroke="#4c9608" stroke-width="0.7"/><path d="M12.4 14.5H17.6M15 11.9V17.1" stroke="#fff" stroke-width="1.6"/></svg>
<svg style="left:60px;top:116px" width="20" height="20" viewBox="0 0 20 20"><defs><linearGradient id="g34" x1="0" y1="0" x2="1" y2="0"><stop offset="0" stop-color="#4a92e0"/><stop offset="0.5" stop-color="#6aaaf0"/><stop offset="1" stop-color="#4f95e3"/></linearGradient></defs><defs><linearGradient id="g35" x1="0" y1="0" x2="1" y2="0"><stop offset="0" stop-color="#5a9fe8"/><stop offset="1" stop-color="#86c0f7"/></linearGradient></defs><rect x="0.2" y="0" width="2.6" height="19" rx="0.9" fill="#c49a5a" stroke="#a27a42" stroke-width="0.5"/><path d="M11.3 4C12.8 4.8 14.5 4.6 16 4.2C17.3 3.9 18.2 4.2 18.7 5.1C17.2 6.8 16.2 8.8 15 10C13.8 11.1 12.5 11.4 11.3 11.2Z" fill="url(#g35)" stroke="#3f86d6" stroke-width="0.6" stroke-linejoin="round"/><path d="M2.8 1.3C4.5 0.5 7 0 9 0.7C10.4 1.2 11.2 2.4 11.4 4V11.2C10.5 10.3 8.2 10 6.2 10.3C4.6 10.5 3.6 10.8 2.8 11Z" fill="url(#g34)" stroke="#3f86d6" stroke-width="0.6" stroke-linejoin="round"/><defs><radialGradient id="g36" cx="0.45" cy="0.4" r="0.7"><stop offset="0" stop-color="#9ad84a"/><stop offset="1" stop-color="#5aa80a"/></radialGradient></defs><circle cx="14" cy="14" r="4.6" fill="url(#g36)" stroke="#4c9608" stroke-width="0.7"/><path d="M11.4 14H16.6M14 11.4V16.6" stroke="#fff" stroke-width="1.6"/></svg>
<svg style="left:91px;top:116px" width="16" height="20" viewBox="0 0 16 20"><defs><linearGradient id="g37" x1="0" y1="0" x2="1" y2="0"><stop offset="0" stop-color="#f4d98a"/><stop offset="1" stop-color="#e2b24c"/></linearGradient></defs><rect x="0.5" y="0.5" width="9" height="18" fill="url(#g37)" stroke="#c99532" stroke-width="1"/><path d="M1 4.3H4.5M1 7.5H5.5M1 10.5H4.5M1 13.5H5.5M1 16.5H4.5" stroke="#c58a1e" stroke-width="1"/><defs><radialGradient id="g38" cx="0.45" cy="0.4" r="0.7"><stop offset="0" stop-color="#9ad84a"/><stop offset="1" stop-color="#5aa80a"/></radialGradient></defs><circle cx="9.5" cy="14.5" r="4.6" fill="url(#g38)" stroke="#4c9608" stroke-width="0.7"/><path d="M6.9 14.5H12.1M9.5 11.9V17.1" stroke="#fff" stroke-width="1.6"/></svg>
<div class="a" style="left:113px;top:116px;width:1px;height:20px;background:#d4d4d4;"></div>
<svg style="left:120px;top:116px" width="20" height="20" viewBox="0 0 20 20"><defs><linearGradient id="g39" x1="0" y1="0" x2="0" y2="1"><stop offset="0" stop-color="#94c700"/><stop offset="1" stop-color="#a4d60e"/></linearGradient></defs><circle cx="9.7" cy="9.5" r="8.7" fill="url(#g39)" stroke="#5b9c0c" stroke-width="1"/><circle cx="9.7" cy="9.5" r="7.499999999999999" fill="none" stroke="#fff" stroke-opacity="0.3" stroke-width="0.8"/><path d="M5.245263157894737 10.565263157894737L8.441052631578946 12.986315789473684L14.154736842105262 6.691578947368422" fill="none" stroke="#fff" stroke-width="1.8399999999999996" stroke-linejoin="miter"/></svg>
<svg style="left:147px;top:116px" width="20" height="20" viewBox="0 0 20 20"><defs><linearGradient id="g40" x1="0" y1="0" x2="0" y2="1"><stop offset="0" stop-color="#e0381c"/><stop offset="1" stop-color="#fa8a6e"/></linearGradient></defs><circle cx="9.8" cy="9.5" r="8.7" fill="url(#g40)" stroke="#d04a30" stroke-width="1"/><circle cx="9.8" cy="9.5" r="7.499999999999999" fill="none" stroke="#fff" stroke-opacity="0.3" stroke-width="0.8"/><rect x="5.151578947368423" y="8.14421052631579" width="9.490526315789474" height="2.517894736842105" fill="#fff"/></svg>
<svg style="left:172px;top:114px" width="24" height="24" viewBox="0 0 24 24"><path d="M3.8 3.6C6.5 3 9.8 5.5 12.8 8.8C15 11.5 16.8 14.5 18.4 17.9L17.3 18.4C15.5 15 13.5 12.2 11.5 10.3C9 8 6 7.2 4.5 6.6C3.4 6.1 3.2 4.2 3.8 3.6Z" fill="#3c3c3c"/><path d="M20.4 4.3C17 5.6 14.2 7.6 12.2 9.6C9.2 13 7.2 16.5 6.2 18.6C5.3 19.8 4.2 19.3 4.6 17.6C5.8 14 8.3 10.5 10.9 8.4C14 5.9 17 4.4 20.1 3.5Z" fill="#3c3c3c"/></svg>
<div class="a" style="left:0px;top:141px;width:400px;height:556px;background:#fff;border:1px solid #828790;"></div>
<svg style="left:5px;top:143px" width="19" height="20" viewBox="0 0 19 20"><path d="M4.5 7V18H10M4.5 11.5H10" fill="none" stroke="#c8c8c8" stroke-width="1.2"/><path d="M0.5 1H4.1L5.0 2H9.5V7H0.5Z" fill="#f3cf74" stroke="#d9a84e" stroke-width="0.7"/><rect x="1.5" y="3" width="7" height="3" fill="#fbe49c"/><path d="M10 4.5H13.2L14.0 5.5H18V10.5H10Z" fill="#f3cf74" stroke="#d9a84e" stroke-width="0.7"/><rect x="11" y="6.5" width="6" height="3" fill="#fbe49c"/><path d="M10 13H13.2L14.0 14H18V19H10Z" fill="#f3cf74" stroke="#d9a84e" stroke-width="0.7"/><rect x="11" y="15" width="6" height="3" fill="#fbe49c"/></svg>
<div class="t" style="left:30.2px;top:147px;font-size:14px;letter-spacing:0.116px;">Workspace (1 chunks, 0 cameras)</div>
<div class="a" style="left:26px;top:164px;width:222px;height:22px;background:#cce8ff;"></div>
<div class="a" style="left:28px;top:164px;width:220px;height:22px;border:1px dotted #000;"></div>
<svg style="left:30px;top:166px" width="18" height="17" viewBox="0 0 18 17"><defs><pattern id="chk2" width="3" height="3" patternUnits="userSpaceOnUse"><rect width="3" height="3" fill="#72b6f0"/><rect width="1.5" height="1.5" fill="#a3d2f8"/><rect x="1.5" y="1.5" width="1.5" height="1.5" fill="#a3d2f8"/></pattern></defs><rect x="0" y="0" width="17.5" height="17" fill="url(#chk2)" stroke="#7fb6e6" stroke-width="0.8"/></svg>
<div class="t" style="left:55.5px;top:169px;font-size:14px;font-weight:bold;letter-spacing:0.33px;">Chunk 1 (0 cameras)</div>
<div class="a" style="left:0px;top:703px;width:400px;height:278px;background:#fff;border:1px solid #828790;"></div>
<div class="a" style="left:405px;top:108px;width:1513px;height:722px;background:#fff;border:1px solid #d9d9d9;"></div>
<div class="a" style="left:405px;top:85px;width:64px;height:24px;background:#fff;border:1px solid #d9d9d9;border-bottom:none;"></div>
<div class="t" style="left:420.6px;top:92px;font-size:12px;letter-spacing:0.25px;">Model</div>
<div class="a" style="left:407px;top:110px;width:1509px;height:717px;background:#808080;"></div>
<svg style="left:420px;top:126px" width="100" height="14" viewBox="0 0 100 14"><path d="M3 0h1v1h-1zM4 0h1v1h-1zM5 0h1v1h-1zM6 0h1v1h-1zM7 0h1v1h-1zM8 1h1v1h-1zM8 2h1v1h-1zM8 3h1v1h-1zM3 4h1v1h-1zM4 4h1v1h-1zM5 4h1v1h-1zM6 4h1v1h-1zM7 4h1v1h-1zM3 0h1v1h-1zM3 1h1v1h-1zM3 2h1v1h-1zM3 3h1v1h-1zM3 4h1v1h-1zM3 5h1v1h-1zM3 6h1v1h-1zM3 7h1v1h-1zM3 8h1v1h-1zM11 2h1v1h-1zM12 2h1v1h-1zM13 2h1v1h-1zM14 2h1v1h-1zM10 3h1v1h-1zM10 4h1v1h-1zM10 5h1v1h-1zM10 6h1v1h-1zM10 7h1v1h-1zM15 3h1v1h-1zM15 4h1v1h-1zM15 5h1v1h-1zM10 5h1v1h-1zM11 5h1v1h-1zM12 5h1v1h-1zM13 5h1v1h-1zM14 5h1v1h-1zM15 5h1v1h-1zM15 7h1v1h-1zM11 8h1v1h-1zM12 8h1v1h-1zM13 8h1v1h-1zM14 8h1v1h-1zM17 2h1v1h-1zM17 3h1v1h-1zM17 4h1v1h-1zM17 5h1v1h-1zM17 6h1v1h-1zM17 7h1v1h-1zM17 8h1v1h-1zM18 3h1v1h-1zM19 2h1v1h-1zM20 2h1v1h-1zM23 2h1v1h-1zM24 2h1v1h-1zM25 2h1v1h-1zM26 3h1v1h-1zM22 3h1v1h-1zM22 4h1v1h-1zM23 5h1v1h-1zM24 5h1v1h-1zM25 5h1v1h-1zM26 6h1v1h-1zM26 7h1v1h-1zM22 7h1v1h-1zM23 8h1v1h-1zM24 8h1v1h-1zM25 8h1v1h-1zM28 2h1v1h-1zM28 3h1v1h-1zM28 4h1v1h-1zM28 5h1v1h-1zM28 6h1v1h-1zM28 7h1v1h-1zM28 8h1v1h-1zM28 9h1v1h-1zM28 10h1v1h-1zM28 11h1v1h-1zM29 3h1v1h-1zM30 2h1v1h-1zM31 2h1v1h-1zM32 2h1v1h-1zM33 3h1v1h-1zM33 4h1v1h-1zM33 5h1v1h-1zM33 6h1v1h-1zM33 7h1v1h-1zM29 8h1v1h-1zM30 8h1v1h-1zM31 8h1v1h-1zM32 8h1v1h-1zM36 2h1v1h-1zM37 2h1v1h-1zM38 2h1v1h-1zM39 2h1v1h-1zM35 3h1v1h-1zM35 4h1v1h-1zM35 5h1v1h-1zM35 6h1v1h-1zM35 7h1v1h-1zM40 3h1v1h-1zM40 4h1v1h-1zM40 5h1v1h-1zM35 5h1v1h-1zM36 5h1v1h-1zM37 5h1v1h-1zM38 5h1v1h-1zM39 5h1v1h-1zM40 5h1v1h-1zM40 7h1v1h-1zM36 8h1v1h-1zM37 8h1v1h-1zM38 8h1v1h-1zM39 8h1v1h-1zM43 2h1v1h-1zM44 2h1v1h-1zM45 2h1v1h-1zM46 2h1v1h-1zM42 3h1v1h-1zM42 4h1v1h-1zM42 5h1v1h-1zM42 6h1v1h-1zM42 7h1v1h-1zM43 8h1v1h-1zM44 8h1v1h-1zM45 8h1v1h-1zM46 8h1v1h-1zM49 0h1v1h-1zM49 1h1v1h-1zM49 2h1v1h-1zM49 3h1v1h-1zM49 4h1v1h-1zM49 5h1v1h-1zM49 6h1v1h-1zM49 7h1v1h-1zM48 2h1v1h-1zM49 2h1v1h-1zM50 2h1v1h-1zM51 2h1v1h-1zM50 8h1v1h-1zM51 8h1v1h-1zM53 0h1v1h-1zM53 2h1v1h-1zM53 3h1v1h-1zM53 4h1v1h-1zM53 5h1v1h-1zM53 6h1v1h-1zM53 7h1v1h-1zM53 8h1v1h-1zM55 2h1v1h-1zM55 3h1v1h-1zM56 4h1v1h-1zM56 5h1v1h-1zM56 6h1v1h-1zM57 7h1v1h-1zM57 8h1v1h-1zM58 4h1v1h-1zM58 5h1v1h-1zM58 6h1v1h-1zM59 2h1v1h-1zM59 3h1v1h-1zM62 2h1v1h-1zM63 2h1v1h-1zM64 2h1v1h-1zM65 2h1v1h-1zM61 3h1v1h-1zM61 4h1v1h-1zM61 5h1v1h-1zM61 6h1v1h-1zM61 7h1v1h-1zM66 3h1v1h-1zM66 4h1v1h-1zM66 5h1v1h-1zM61 5h1v1h-1zM62 5h1v1h-1zM63 5h1v1h-1zM64 5h1v1h-1zM65 5h1v1h-1zM66 5h1v1h-1zM66 7h1v1h-1zM62 8h1v1h-1zM63 8h1v1h-1zM64 8h1v1h-1zM65 8h1v1h-1zM73 0h1v1h-1zM74 0h1v1h-1zM75 0h1v1h-1zM76 0h1v1h-1zM72 1h1v1h-1zM77 1h1v1h-1zM77 2h1v1h-1zM77 3h1v1h-1zM74 4h1v1h-1zM75 4h1v1h-1zM76 4h1v1h-1zM77 5h1v1h-1zM77 6h1v1h-1zM77 7h1v1h-1zM72 7h1v1h-1zM73 8h1v1h-1zM74 8h1v1h-1zM75 8h1v1h-1zM76 8h1v1h-1zM80 0h1v1h-1zM81 0h1v1h-1zM82 0h1v1h-1zM83 0h1v1h-1zM79 1h1v1h-1zM79 2h1v1h-1zM79 3h1v1h-1zM79 4h1v1h-1zM79 5h1v1h-1zM79 6h1v1h-1zM79 7h1v1h-1zM84 1h1v1h-1zM84 2h1v1h-1zM84 3h1v1h-1zM84 4h1v1h-1zM84 5h1v1h-1zM84 6h1v1h-1zM84 7h1v1h-1zM80 8h1v1h-1zM81 8h1v1h-1zM82 8h1v1h-1zM83 8h1v1h-1zM87 0h1v1h-1zM88 0h1v1h-1zM89 0h1v1h-1zM86 1h1v1h-1zM86 2h1v1h-1zM86 3h1v1h-1zM90 1h1v1h-1zM90 2h1v1h-1zM90 3h1v1h-1zM87 4h1v1h-1zM88 4h1v1h-1zM89 4h1v1h-1z" fill="#0000ff" shape-rendering="crispEdges"/></svg>
<svg style="left:1053px;top:360px" width="218" height="218" viewBox="0 0 218 218"><defs><radialGradient id="g41" cx="0.45" cy="0.4" r="0.62"><stop offset="0" stop-color="#939393"/><stop offset="0.55" stop-color="#8b8b8b"/><stop offset="1" stop-color="#787878"/></radialGradient></defs><circle cx="108.5" cy="108.5" r="107.5" fill="url(#g41)"/><g shape-rendering="crispEdges"><path d="M0 108.5H216" stroke="#68a468" stroke-width="1"/><path d="M108.5 0V216" stroke="#c46868" stroke-width="1"/><circle cx="108.5" cy="108.5" r="107.5" fill="none" stroke="#6464c6" stroke-width="1"/></g></svg>
<svg style="left:1850px;top:710px" width="70" height="70" viewBox="0 0 70 70"><g shape-rendering="crispEdges"><rect x="10" y="22" width="2" height="40" fill="#00c800"/><rect x="11" y="61" width="40" height="2" fill="#c80000"/><path d="M11 5h1v1h-1zM12 6h1v1h-1zM12 7h1v1h-1zM13 8h1v1h-1zM14 9h1v1h-1zM14 10h1v1h-1zM14 11h1v1h-1zM14 12h1v1h-1zM14 13h1v1h-1zM15 8h1v1h-1zM16 6h1v1h-1zM16 7h1v1h-1zM17 5h1v1h-1zM11 50h1v1h-1zM12 50h1v1h-1zM13 50h1v1h-1zM14 50h1v1h-1zM15 50h1v1h-1zM16 50h1v1h-1zM16 51h1v1h-1zM15 52h1v1h-1zM14 53h1v1h-1zM13 54h1v1h-1zM13 55h1v1h-1zM12 56h1v1h-1zM11 57h1v1h-1zM11 58h1v1h-1zM12 58h1v1h-1zM13 58h1v1h-1zM14 58h1v1h-1zM15 58h1v1h-1zM16 58h1v1h-1zM56 50h1v1h-1zM57 51h1v1h-1zM58 52h1v1h-1zM58 53h1v1h-1zM59 54h1v1h-1zM58 55h1v1h-1zM58 56h1v1h-1zM57 57h1v1h-1zM56 58h1v1h-1zM62 50h1v1h-1zM61 51h1v1h-1zM60 52h1v1h-1zM60 53h1v1h-1zM60 55h1v1h-1zM60 56h1v1h-1zM61 57h1v1h-1zM62 58h1v1h-1z" fill="#0000ff"/></g></svg>
<div class="a" style="left:405px;top:837px;width:1515px;height:23px;background:#d9d9d9;border:1px solid #b9b9b9;"></div>
<div class="t" style="left:410.5px;top:844px;font-size:12.5px;letter-spacing:-0.08px;">Photos</div>
<svg style="left:1890px;top:844px" width="8" height="9" viewBox="0 0 8 9"><path d="M2 0H8V6H5V5H7V2H3V3H2Z" fill="#000"/><path d="M0 3H6V9H0Z M1 5V8H5V5Z" fill="#000" fill-rule="evenodd"/><rect x="1" y="5" width="4" height="3" fill="#ececec"/></svg>
<svg style="left:1907px;top:845px" width="8" height="7" viewBox="0 0 8 7"><path d="M0.6 0.6L7.4 6.4M7.4 0.6L0.6 6.4" stroke="#000" stroke-width="1.7"/></svg>
<svg style="left:410px;top:867px" width="20" height="20" viewBox="0 0 20 20"><defs><linearGradient id="g42" x1="0" y1="0" x2="0" y2="1"><stop offset="0" stop-color="#b4b4b4"/><stop offset="1" stop-color="#c6c6c6"/></linearGradient></defs><circle cx="9.5" cy="9.5" r="8.5" fill="url(#g42)" stroke="#9c9c9c" stroke-width="1"/><circle cx="9.5" cy="9.5" r="7.3" fill="none" stroke="#fff" stroke-opacity="0.3" stroke-width="0.8"/><path d="M5.142105263157895 10.542105263157895L8.26842105263158 12.910526315789474L13.857894736842105 6.752631578947369" fill="none" stroke="#fff" stroke-width="1.7999999999999998" stroke-linejoin="miter"/></svg>
<svg style="left:437px;top:867px" width="20" height="20" viewBox="0 0 20 20"><defs><linearGradient id="g43" x1="0" y1="0" x2="0" y2="1"><stop offset="0" stop-color="#ababab"/><stop offset="1" stop-color="#c8c8c8"/></linearGradient></defs><circle cx="9.5" cy="9.5" r="8.5" fill="url(#g43)" stroke="#9c9c9c" stroke-width="1"/><circle cx="9.5" cy="9.5" r="7.3" fill="none" stroke="#fff" stroke-opacity="0.3" stroke-width="0.8"/><rect x="4.9526315789473685" y="8.173684210526316" width="9.284210526315789" height="2.463157894736842" fill="#fff"/></svg>
<svg style="left:462px;top:864px" width="24" height="24" viewBox="0 0 24 24"><path d="M3.8 3.6C6.5 3 9.8 5.5 12.8 8.8C15 11.5 16.8 14.5 18.4 17.9L17.3 18.4C15.5 15 13.5 12.2 11.5 10.3C9 8 6 7.2 4.5 6.6C3.4 6.1 3.2 4.2 3.8 3.6Z" fill="#7d7d7d"/><path d="M20.4 4.3C17 5.6 14.2 7.6 12.2 9.6C9.2 13 7.2 16.5 6.2 18.6C5.3 19.8 4.2 19.3 4.6 17.6C5.8 14 8.3 10.5 10.9 8.4C14 5.9 17 4.4 20.1 3.5Z" fill="#7d7d7d"/></svg>
<div class="a" style="left:491px;top:867px;width:1px;height:20px;background:#d4d4d4;"></div>
<svg style="left:498px;top:867px" width="20" height="19" viewBox="0 0 20 19"><path d="M1 18.3L9.6 10.3V18.3Z" fill="#fbfbfb" stroke="#c4c4c4" stroke-width="1.3" stroke-linejoin="round"/><rect x="10" y="3" width="1.3" height="15.8" fill="#bdbdbd"/><path d="M12 3.8L19.3 18.3H12Z" fill="#dedede" stroke="#c2c2c2" stroke-width="1.3" stroke-linejoin="round"/><path d="M1.8 7.5C2.5 3.5 6 2.2 8.8 4" fill="none" stroke="#ababab" stroke-width="2.6" stroke-linecap="round"/><path d="M6.8 0.6L10.8 4.3L6.4 6.6Z" fill="#ababab"/></svg>
<svg style="left:525px;top:867px" width="20" height="19" viewBox="0 0 20 19"><g transform="translate(20,0) scale(-1,1)"><path d="M1 18.3L9.6 10.3V18.3Z" fill="#fbfbfb" stroke="#c4c4c4" stroke-width="1.3" stroke-linejoin="round"/><rect x="10" y="3" width="1.3" height="15.8" fill="#bdbdbd"/><path d="M12 3.8L19.3 18.3H12Z" fill="#dedede" stroke="#c2c2c2" stroke-width="1.3" stroke-linejoin="round"/><path d="M1.8 7.5C2.5 3.5 6 2.2 8.8 4" fill="none" stroke="#ababab" stroke-width="2.6" stroke-linecap="round"/><path d="M6.8 0.6L10.8 4.3L6.4 6.6Z" fill="#ababab"/></g></svg>
<div class="a" style="left:552px;top:867px;width:1px;height:20px;background:#d4d4d4;"></div>
<svg style="left:561px;top:867px" width="19" height="20" viewBox="0 0 19 20"><rect x="1.5" y="0.5" width="4.5" height="6" fill="#b5b5b5" stroke="#9a9a9a" stroke-width="0.7"/><rect x="10.5" y="0.5" width="4.5" height="6" fill="#b5b5b5" stroke="#9a9a9a" stroke-width="0.7"/><path d="M0.5 19V8L2 6H7L8 10H10L11 6H16L17 8.5L18.5 11L17 13L18.5 16L16 19H11L10 15H8L7 19Z" fill="#a8a8a8" stroke="#8e8e8e" stroke-width="0.7" stroke-linejoin="round"/></svg>
<svg style="left:587px;top:867px" width="19" height="19" viewBox="0 0 19 19"><defs><pattern id="chk3" width="3" height="3" patternUnits="userSpaceOnUse"><rect width="3" height="3" fill="#c7e6fd"/><rect width="1.5" height="1.5" fill="#a9d6fb"/><rect x="1.5" y="1.5" width="1.5" height="1.5" fill="#a9d6fb"/></pattern></defs><rect x="0.5" y="0.5" width="17.5" height="17.5" rx="1" fill="url(#chk3)" stroke="#7dbbf0" stroke-width="1"/><circle cx="9.2" cy="9.2" r="4.8" fill="#fff" stroke="#8ec6f3" stroke-width="1.2"/></svg>
<svg style="left:613px;top:867px" width="20" height="20" viewBox="0 0 20 20"><rect x="0.3" y="0.3" width="4.4" height="4.1" rx="1.3" fill="#8fbf4a"/><rect x="1.3" y="1.5" width="2.4" height="1.2" fill="#fff" opacity="0.35"/><rect x="5.3" y="0.3" width="4.4" height="4.1" rx="1.3" fill="#5cb8ef"/><rect x="6.3" y="1.5" width="2.4" height="1.2" fill="#fff" opacity="0.35"/><rect x="10.3" y="0.3" width="4.4" height="4.1" rx="1.3" fill="#f39a5a"/><rect x="11.3" y="1.5" width="2.4" height="1.2" fill="#fff" opacity="0.35"/><rect x="15.3" y="0.3" width="4.4" height="4.1" rx="1.3" fill="#b48ae8"/><rect x="16.3" y="1.5" width="2.4" height="1.2" fill="#fff" opacity="0.35"/><rect x="0.3" y="5.1" width="4.4" height="4.1" rx="1.3" fill="#b48ae8"/><rect x="1.3" y="6.3" width="2.4" height="1.2" fill="#fff" opacity="0.35"/><rect x="5.3" y="5.1" width="4.4" height="4.1" rx="1.3" fill="#f39a5a"/><rect x="6.3" y="6.3" width="2.4" height="1.2" fill="#fff" opacity="0.35"/><rect x="10.3" y="5.1" width="4.4" height="4.1" rx="1.3" fill="#5cb8ef"/><rect x="11.3" y="6.3" width="2.4" height="1.2" fill="#fff" opacity="0.35"/><rect x="15.3" y="5.1" width="4.4" height="4.1" rx="1.3" fill="#8fbf4a"/><rect x="16.3" y="6.3" width="2.4" height="1.2" fill="#fff" opacity="0.35"/><rect x="0.3" y="9.9" width="4.4" height="4.1" rx="1.3" fill="#8fbf4a"/><rect x="1.3" y="11.1" width="2.4" height="1.2" fill="#fff" opacity="0.35"/><rect x="5.3" y="9.9" width="4.4" height="4.1" rx="1.3" fill="#5cb8ef"/><rect x="6.3" y="11.1" width="2.4" height="1.2" fill="#fff" opacity="0.35"/><rect x="10.3" y="9.9" width="4.4" height="4.1" rx="1.3" fill="#f39a5a"/><rect x="11.3" y="11.1" width="2.4" height="1.2" fill="#fff" opacity="0.35"/><rect x="15.3" y="9.9" width="4.4" height="4.1" rx="1.3" fill="#b48ae8"/><rect x="16.3" y="11.1" width="2.4" height="1.2" fill="#fff" opacity="0.35"/><rect x="0.3" y="14.7" width="4.4" height="4.1" rx="1.3" fill="#f39a5a"/><rect x="1.3" y="15.899999999999999" width="2.4" height="1.2" fill="#fff" opacity="0.35"/><rect x="5.3" y="14.7" width="4.4" height="4.1" rx="1.3" fill="#b48ae8"/><rect x="6.3" y="15.899999999999999" width="2.4" height="1.2" fill="#fff" opacity="0.35"/><rect x="10.3" y="14.7" width="4.4" height="4.1" rx="1.3" fill="#8fbf4a"/><rect x="11.3" y="15.899999999999999" width="2.4" height="1.2" fill="#fff" opacity="0.35"/><rect x="15.3" y="14.7" width="4.4" height="4.1" rx="1.3" fill="#5cb8ef"/><rect x="16.3" y="15.899999999999999" width="2.4" height="1.2" fill="#fff" opacity="0.35"/></svg>
<svg style="left:640px;top:875px" width="9.5" height="5" viewBox="0 0 9.5 5"><path d="M0 0H9.5L4.75 5Z" fill="#000"/></svg>
<div class="a" style="left:405px;top:892px;width:1515px;height:89px;background:#fff;border:1px solid #828790;"></div>
<div class="a" style="left:0px;top:981px;width:95px;height:24px;background:#fff;border:1px solid #d9d9d9;border-top:none;"></div>
<div class="a" style="left:95px;top:1002px;width:84px;height:1px;background:#dcdcdc;"></div>
<div class="t" style="left:15.1px;top:988px;font-size:12.5px;letter-spacing:0.15px;">Workspace</div>
<div class="t" style="left:108.3px;top:987px;font-size:12.5px;letter-spacing:0.025px;">Reference</div>
<div class="a" style="left:405px;top:981px;width:70px;height:24px;background:#fff;border:1px solid #d9d9d9;border-top:none;"></div>
<div class="a" style="left:475px;top:1002px;width:72px;height:1px;background:#dcdcdc;"></div>
<div class="t" style="left:420.4px;top:988px;font-size:12.5px;letter-spacing:-0.08px;">Photos</div>
<div class="t" style="left:488.8px;top:987px;font-size:12.5px;letter-spacing:-0.333px;">Console</div>
<div class="t" style="left:6.8px;top:1011px;font-size:15px;letter-spacing:0.188px;">Load additional photos</div>
<svg style="left:1903px;top:1011px" width="16" height="15" viewBox="0 0 16 15"><rect x="0.5" y="0.5" width="6" height="6" fill="#fff" stroke="#7a7a7a" stroke-width="1"/><rect x="2" y="2.5" width="3" height="2" fill="#888"/><rect x="8.5" y="0.5" width="6" height="6" fill="#fff" stroke="#7a7a7a" stroke-width="1"/><rect x="10" y="2.5" width="3" height="2" fill="#888"/><rect x="1" y="12" width="6" height="1.6" fill="#333"/><circle cx="10.6" cy="9.4" r="3.9" fill="#f4f4f4" stroke="#e2301a" stroke-width="2.4"/><path d="M8.2 6.9L13 11.9" stroke="#e2301a" stroke-width="1.6"/></svg>
<div class="a" style="left:0px;top:1029px;width:1920px;height:1px;background:#fafafa;"></div>
<div class="a" style="left:0px;top:1030px;width:1920px;height:2px;background:#2f2f2f;"></div>
<div class="a" style="left:326px;top:180px;width:4px;height:532px;background:linear-gradient(to right, rgba(0,0,0,0.42), rgba(0,0,0,0.12) 50%, rgba(0,0,0,0));"></div>
<div class="a" style="left:105px;top:712px;width:221px;height:4px;background:linear-gradient(to bottom, rgba(0,0,0,0.42), rgba(0,0,0,0.12) 50%, rgba(0,0,0,0));"></div>
<div class="a" style="left:326px;top:712px;width:4px;height:4px;background:radial-gradient(circle at 0 0, rgba(0,0,0,0.38), rgba(0,0,0,0) 4px);"></div>
<div class="a" style="left:98px;top:173px;width:228px;height:539px;background:#f0f0f0;border:1px solid #bcbcbc;"></div>
<div class="a" style="left:101px;top:176px;width:221px;height:26px;background:#91c9f7;"></div>
<div class="t" style="left:135.4px;top:183px;font-size:14px;letter-spacing:0.491px;">Add Photos<span style="letter-spacing:-1.2px">..</span>.</div>
<svg style="left:103px;top:179px" width="20" height="20" viewBox="0 0 20 20"><defs><linearGradient id="g44" x1="0" y1="0" x2="1" y2="1"><stop offset="0" stop-color="#1e88f0"/><stop offset="1" stop-color="#8fd0ff"/></linearGradient></defs><defs><linearGradient id="g45" x1="0" y1="0" x2="0" y2="1"><stop offset="0" stop-color="#b9d86e"/><stop offset="1" stop-color="#5e9a23"/></linearGradient></defs><defs><linearGradient id="g46" x1="0" y1="0" x2="1" y2="1"><stop offset="0" stop-color="#ff1a10"/><stop offset="1" stop-color="#ffb23c"/></linearGradient></defs><rect x="0.8" y="0.8" width="10.6" height="10" fill="#fff" stroke="#7fa6cc" stroke-width="0.9"/><rect x="1.8" y="1.8" width="8.6" height="8" fill="url(#g44)"/><rect x="11" y="3.6" width="7.8" height="9.6" fill="#fff" stroke="#7fa6cc" stroke-width="0.9"/><rect x="11.6" y="4.4" width="6.6" height="8" fill="url(#g45)"/><rect x="5" y="8" width="9.6" height="10.6" fill="#fff" stroke="#7fa6cc" stroke-width="0.9"/><rect x="5.8" y="8.8" width="8" height="8.2" fill="url(#g46)"/><defs><radialGradient id="g47" cx="0.45" cy="0.4" r="0.7"><stop offset="0" stop-color="#9ad84a"/><stop offset="1" stop-color="#5aa80a"/></radialGradient></defs><circle cx="15" cy="14.5" r="4.6" fill="url(#g47)" stroke="#4c9608" stroke-width="0.7"/><path d="M12.4 14.5H17.6M15 11.9V17.1" stroke="#fff" stroke-width="1.6"/></svg>
<div class="t" style="left:135.4px;top:209px;font-size:14px;letter-spacing:0.534px;">Add Marker</div>
<svg style="left:104px;top:205px" width="20" height="20" viewBox="0 0 20 20"><defs><linearGradient id="g48" x1="0" y1="0" x2="1" y2="0"><stop offset="0" stop-color="#4a92e0"/><stop offset="0.5" stop-color="#6aaaf0"/><stop offset="1" stop-color="#4f95e3"/></linearGradient></defs><defs><linearGradient id="g49" x1="0" y1="0" x2="1" y2="0"><stop offset="0" stop-color="#5a9fe8"/><stop offset="1" stop-color="#86c0f7"/></linearGradient></defs><rect x="0.2" y="0" width="2.6" height="19" rx="0.9" fill="#c49a5a" stroke="#a27a42" stroke-width="0.5"/><path d="M11.3 4C12.8 4.8 14.5 4.6 16 4.2C17.3 3.9 18.2 4.2 18.7 5.1C17.2 6.8 16.2 8.8 15 10C13.8 11.1 12.5 11.4 11.3 11.2Z" fill="url(#g49)" stroke="#3f86d6" stroke-width="0.6" stroke-linejoin="round"/><path d="M2.8 1.3C4.5 0.5 7 0 9 0.7C10.4 1.2 11.2 2.4 11.4 4V11.2C10.5 10.3 8.2 10 6.2 10.3C4.6 10.5 3.6 10.8 2.8 11Z" fill="url(#g48)" stroke="#3f86d6" stroke-width="0.6" stroke-linejoin="round"/><defs><radialGradient id="g50" cx="0.45" cy="0.4" r="0.7"><stop offset="0" stop-color="#9ad84a"/><stop offset="1" stop-color="#5aa80a"/></radialGradient></defs><circle cx="14" cy="13" r="4.6" fill="url(#g50)" stroke="#4c9608" stroke-width="0.7"/><path d="M11.4 13H16.6M14 10.4V15.6" stroke="#fff" stroke-width="1.6"/></svg>
<div class="t" style="left:135.4px;top:235px;font-size:14px;letter-spacing:0.3px;">Add Frames<span style="letter-spacing:-1.2px">..</span>.</div>
<svg style="left:103px;top:231px" width="20" height="20" viewBox="0 0 20 20"><defs><radialGradient id="g51" cx="0.5" cy="0.5" r="0.5"><stop offset="0" stop-color="#fffdf0"/><stop offset="1" stop-color="#ece0a8"/></radialGradient></defs><circle cx="9.5" cy="9.5" r="8.7" fill="#3f8ede"/><circle cx="9.5" cy="9.5" r="6.9" fill="url(#g51)"/><circle cx="15.10" cy="9.50" r="0.45" fill="#b8a878"/><circle cx="14.35" cy="12.30" r="0.45" fill="#b8a878"/><circle cx="12.30" cy="14.35" r="0.45" fill="#b8a878"/><circle cx="9.50" cy="15.10" r="0.45" fill="#b8a878"/><circle cx="6.70" cy="14.35" r="0.45" fill="#b8a878"/><circle cx="4.65" cy="12.30" r="0.45" fill="#b8a878"/><circle cx="3.90" cy="9.50" r="0.45" fill="#b8a878"/><circle cx="4.65" cy="6.70" r="0.45" fill="#b8a878"/><circle cx="6.70" cy="4.65" r="0.45" fill="#b8a878"/><circle cx="9.50" cy="3.90" r="0.45" fill="#b8a878"/><circle cx="12.30" cy="4.65" r="0.45" fill="#b8a878"/><circle cx="14.35" cy="6.70" r="0.45" fill="#b8a878"/><path d="M6.3 5.2L10.2 9.4L7.2 12.8" fill="none" stroke="#3a3a3a" stroke-width="1.3" stroke-linejoin="round"/><defs><radialGradient id="g52" cx="0.45" cy="0.4" r="0.7"><stop offset="0" stop-color="#9ad84a"/><stop offset="1" stop-color="#5aa80a"/></radialGradient></defs><circle cx="15" cy="14.5" r="4.6" fill="url(#g52)" stroke="#4c9608" stroke-width="0.7"/><path d="M12.4 14.5H17.6M15 11.9V17.1" stroke="#fff" stroke-width="1.6"/></svg>
<div class="a" style="left:131px;top:258px;width:191px;height:1px;background:#d7d7d7;"></div>
<div class="t" style="left:135.4px;top:270px;font-size:14px;letter-spacing:-0.024px;">Enable Chunks</div>
<svg style="left:103px;top:266px" width="20" height="20" viewBox="0 0 20 20"><defs><linearGradient id="g53" x1="0" y1="0" x2="0" y2="1"><stop offset="0" stop-color="#94c700"/><stop offset="1" stop-color="#a4d60e"/></linearGradient></defs><circle cx="9.8" cy="9.8" r="8.7" fill="url(#g53)" stroke="#5b9c0c" stroke-width="1"/><circle cx="9.8" cy="9.8" r="7.499999999999999" fill="none" stroke="#fff" stroke-opacity="0.3" stroke-width="0.8"/><path d="M5.345263157894738 10.865263157894738L8.541052631578948 13.286315789473685L14.254736842105263 6.9915789473684224" fill="none" stroke="#fff" stroke-width="1.8399999999999996" stroke-linejoin="miter"/></svg>
<div class="t" style="left:135.4px;top:296px;font-size:14px;letter-spacing:0.223px;">Disable Chunks</div>
<svg style="left:103px;top:292px" width="20" height="20" viewBox="0 0 20 20"><defs><linearGradient id="g54" x1="0" y1="0" x2="0" y2="1"><stop offset="0" stop-color="#e0381c"/><stop offset="1" stop-color="#fa8a6e"/></linearGradient></defs><circle cx="9.8" cy="9.8" r="8.7" fill="url(#g54)" stroke="#d04a30" stroke-width="1"/><circle cx="9.8" cy="9.8" r="7.499999999999999" fill="none" stroke="#fff" stroke-opacity="0.3" stroke-width="0.8"/><rect x="5.151578947368423" y="8.444210526315791" width="9.490526315789474" height="2.517894736842105" fill="#fff"/></svg>
<div class="t" style="left:135.4px;top:322px;font-size:14px;letter-spacing:0.059px;">Remove Chunks</div>
<svg style="left:101px;top:316px" width="24" height="24" viewBox="0 0 24 24"><path d="M3.8 3.6C6.5 3 9.8 5.5 12.8 8.8C15 11.5 16.8 14.5 18.4 17.9L17.3 18.4C15.5 15 13.5 12.2 11.5 10.3C9 8 6 7.2 4.5 6.6C3.4 6.1 3.2 4.2 3.8 3.6Z" fill="#3c3c3c"/><path d="M20.4 4.3C17 5.6 14.2 7.6 12.2 9.6C9.2 13 7.2 16.5 6.2 18.6C5.3 19.8 4.2 19.3 4.6 17.6C5.8 14 8.3 10.5 10.9 8.4C14 5.9 17 4.4 20.1 3.5Z" fill="#3c3c3c"/></svg>
<div class="t" style="left:135.4px;top:347px;font-size:14px;letter-spacing:-0.215px;">Save Chunks<span style="letter-spacing:-1.2px">..</span>.</div>
<div class="a" style="left:131px;top:369px;width:191px;height:1px;background:#d7d7d7;"></div>
<div class="t" style="left:135.4px;top:381px;font-size:14px;letter-spacing:0.355px;">Set Active</div>
<svg style="left:103px;top:379px" width="20" height="18" viewBox="0 0 20 18"><path d="M1 9.5L5.5 6.5L8.5 10L16 2L19.5 5L8.5 16Z" fill="#8cc21a" stroke="#79b00f" stroke-width="0.6" stroke-linejoin="round"/></svg>
<div class="t" style="left:135.4px;top:407px;font-size:14px;letter-spacing:0.654px;">Duplicate<span style="letter-spacing:-1.2px">..</span>.</div>
<svg style="left:103px;top:404px" width="20" height="20" viewBox="0 0 20 20"><path d="M0.7 0.7H7.5L10.5 3.7V13H0.7Z" fill="#dcedf8" stroke="#4f9ad3" stroke-width="1.1" stroke-linejoin="round"/><rect x="1.5" y="10.8" width="8.5" height="1.2" fill="#a9d0ea"/><g transform="translate(8,5.5)"><path d="M0.7 0.7H7.5L10.5 3.7V13H0.7Z" fill="#dcedf8" stroke="#4f9ad3" stroke-width="1.1" stroke-linejoin="round"/><rect x="1.5" y="10.8" width="8.5" height="1.2" fill="#a9d0ea"/></g></svg>
<div class="t" style="left:135.4px;top:432px;font-size:14px;color:#838383;letter-spacing:0.251px;">Split Frames<span style="letter-spacing:-1.2px">..</span>.</div>
<div class="t" style="left:135.4px;top:456px;font-size:14px;letter-spacing:0.157px;">Reset Transform</div>
<div class="t" style="left:135.4px;top:480px;font-size:14px;letter-spacing:0.48px;">Remove</div>
<svg style="left:307px;top:482.0px" width="5" height="8" viewBox="0 0 5 8"><path d="M0 0L4.5 4L0 8Z" fill="#000"/></svg>
<div class="t" style="left:135.4px;top:504px;font-size:14px;letter-spacing:-0.317px;">Process</div>
<svg style="left:307px;top:506.0px" width="5" height="8" viewBox="0 0 5 8"><path d="M0 0L4.5 4L0 8Z" fill="#000"/></svg>
<div class="t" style="left:135.4px;top:528px;font-size:14px;letter-spacing:0.54px;">Export</div>
<svg style="left:307px;top:530.0px" width="5" height="8" viewBox="0 0 5 8"><path d="M0 0L4.5 4L0 8Z" fill="#000"/></svg>
<div class="a" style="left:131px;top:550px;width:191px;height:1px;background:#d7d7d7;"></div>
<div class="t" style="left:135.4px;top:562px;font-size:14px;letter-spacing:0.188px;">Rename<span style="letter-spacing:-1.2px">..</span>.</div>
<svg style="left:103px;top:560px" width="19" height="15" viewBox="0 0 19 15"><rect x="0.5" y="0.5" width="17.5" height="13" fill="#fafafa" stroke="#c4c4c4" stroke-width="1"/><rect x="2.5" y="4" width="13" height="5.5" fill="#fff" stroke="#4f9ad3" stroke-width="1"/><rect x="3.5" y="5" width="5" height="3.5" fill="#4f9ad3"/><path d="M9 3V11M7.8 3H10.2M7.8 11H10.2" stroke="#333" stroke-width="0.8"/></svg>
<div class="t" style="left:135.4px;top:587px;font-size:14px;letter-spacing:0.2px;">Set Master Channel<span style="letter-spacing:-1.2px">..</span>.</div>
<div class="t" style="left:135.4px;top:612px;font-size:14px;letter-spacing:0.291px;">Set Image Brightness<span style="letter-spacing:-1.2px">..</span>.</div>
<svg style="left:103px;top:609px" width="20" height="20" viewBox="0 0 20 20"><circle cx="9.8" cy="9.5" r="8.8" fill="#e8e8e8" stroke="#8a8a8a" stroke-width="0.6"/><path d="M16 3.3A8.8 8.8 0 0 1 3.6 15.7Z" fill="#434343"/></svg>
<div class="t" style="left:135.4px;top:638px;font-size:14px;letter-spacing:0.253px;">Raster Calculator<span style="letter-spacing:-1.2px">..</span>.</div>
<svg style="left:103px;top:635px" width="20" height="19" viewBox="0 0 20 19"><path d="M10 1C4.5 1 0.7 4.3 0.7 8.8C0.7 12 3 12.2 4.5 11.5C6 10.8 7 12 6.5 14C6 16.5 8 18 11 17.8C16 17.5 19.3 14 19.3 9.5C19.3 4.5 15.5 1 10 1Z" fill="#f0c27a" stroke="#c58b3d" stroke-width="0.8"/><circle cx="4" cy="6.5" r="1.6" fill="#f03a2a"/><circle cx="7.5" cy="3.8" r="1.6" fill="#f7c21a"/><circle cx="11.5" cy="3.5" r="1.6" fill="#e9e21c"/><circle cx="15.2" cy="6" r="1.6" fill="#7dcb2a"/><circle cx="16" cy="10.5" r="1.6" fill="#2aa3e8"/><circle cx="13" cy="14.5" r="1.6" fill="#b03ae8"/><circle cx="10" cy="9.5" r="1.6" fill="#fff" stroke="#c58b3d" stroke-width="0.5"/></svg>
<div class="t" style="left:135.4px;top:664px;font-size:14px;letter-spacing:0.22px;">Reference Settings<span style="letter-spacing:-1.2px">..</span>.</div>
<svg style="left:103px;top:661px" width="20" height="20" viewBox="0 0 20 20"><path d="M1 7L6 2H13L12 5H8L3.5 9.5Z" fill="#b9b9b9" stroke="#8a8a8a" stroke-width="0.7"/><path d="M14 1.5A3.5 3.5 0 0 1 18.5 6L15.5 7L14.5 5Z" fill="#c4c4c4" stroke="#8a8a8a" stroke-width="0.7"/><path d="M2.5 17.5L11.5 8.5" stroke="#2f7fcf" stroke-width="3.4" stroke-linecap="round"/><path d="M8 8L17.5 17.5" stroke="#3a8fdd" stroke-width="3.4" stroke-linecap="round"/><path d="M2.5 17.5L11.5 8.5M8 8L17.5 17.5" stroke="#6fb8f0" stroke-width="1.2" stroke-linecap="round"/></svg>
<div class="t" style="left:135.4px;top:690px;font-size:14px;letter-spacing:0.408px;">Show Info<span style="letter-spacing:-1.2px">..</span>.</div>
<svg style="left:103px;top:686px" width="20" height="20" viewBox="0 0 20 20"><defs><radialGradient id="g55" cx="0.45" cy="0.3" r="0.7"><stop offset="0" stop-color="#8cc4f7"/><stop offset="1" stop-color="#2566c4"/></radialGradient></defs><circle cx="9.8" cy="9.8" r="9.2" fill="url(#g55)" stroke="#2a63b5" stroke-width="0.8"/><circle cx="9.8" cy="5.2" r="1.5" fill="#fff"/><path d="M8 8.3H11V14.2H12V15.5H7.8V14.2H8.8V9.5H8Z" fill="#fff"/></svg>
</body></html>
